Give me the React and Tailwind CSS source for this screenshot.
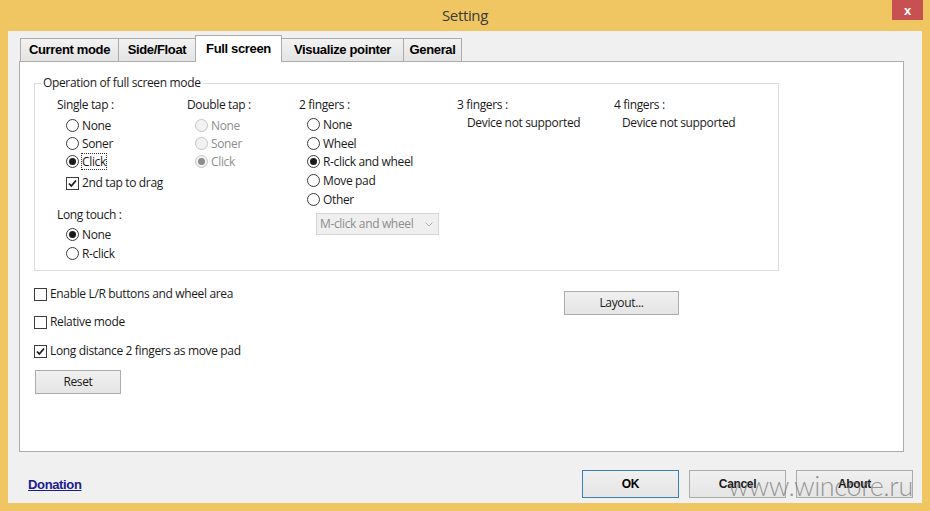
const ui = { fontFamily: '"Open Sans", "Noto Sans", sans-serif', letterSpacing: '-0.35px' }
const tab = { fontFamily: '"Liberation Sans", Arial, sans-serif' }

function Radio({ checked, disabled, label, focus, h = 'h-[18px]' }) {
  return (
    <div className={`flex ${h} items-center gap-[3px]`}>
      <span
        className={`flex h-[13px] w-[13px] shrink-0 items-center justify-center rounded-full border ${
          disabled ? 'border-[#c4c4c4] bg-[#f2f2f2]' : 'border-[#3c3c3c] bg-white'
        }`}
      >
        {checked && (
          <span className={`h-[7px] w-[7px] rounded-full ${disabled ? 'bg-[#8c8c8c]' : 'bg-[#1a1a1a]'}`} />
        )}
      </span>
      <span
        className={`leading-[15px] ${disabled ? 'text-[#8d8d8d]' : 'text-[#1a1a1a]'} ${
          focus ? 'outline outline-1 outline-dotted outline-[#333]' : ''
        }`}
      >
        {label}
      </span>
    </div>
  )
}

function Check({ checked, label, h = 'h-[18px]' }) {
  return (
    <div className={`flex ${h} items-center gap-[3px]`}>
      <span className="flex h-[13px] w-[13px] shrink-0 items-center justify-center border border-[#3c3c3c] bg-white">
        {checked && (
          <svg viewBox="0 0 11 11" className="h-[11px] w-[11px]">
            <path d="M2 5.5 L4.3 8 L9 2.5" fill="none" stroke="#1a1a1a" strokeWidth="1.8" />
          </svg>
        )}
      </span>
      <span className="text-[#1a1a1a]">{label}</span>
    </div>
  )
}

function Btn({ children, className = '', bold = false }) {
  return (
    <div
      className={`flex items-center justify-center border border-[#acacac] bg-gradient-to-b from-[#f0f0f0] to-[#e5e5e5] text-[#1a1a1a] ${className}`}
      style={bold ? tab : ui}
    >
      {children}
    </div>
  )
}

const tabs = [
  { label: 'Current mode', w: 'w-[99px]' },
  { label: 'Side/Float', w: 'w-[78px]' },
  { label: 'Full screen', w: 'w-[87px]', active: true },
  { label: 'Visualize pointer', w: 'w-[123px]' },
  { label: 'General', w: 'w-[59px]' },
]

export default function App() {
  return (
    <div className="flex h-[511px] w-[930px] flex-col bg-[#f0c663]">
      {/* Title bar */}
      <div className="relative flex h-[31px] shrink-0 items-center justify-center">
        <span className="text-[15px] text-[#3a3a3a]" style={ui}>Setting</span>
        <div className="absolute right-[7px] top-0 flex h-[20px] w-[31px] items-center justify-center bg-[#c75050]">
          <span className="text-[13px] font-bold leading-none text-white" style={tab}>x</span>
        </div>
      </div>

      {/* Client area */}
      <div className="relative mx-[8px] mb-[8px] flex flex-1 flex-col bg-[#f0f0f0] pl-[11px] pr-[18px] text-[12px]" style={ui}>
        {/* Tabs */}
        <div className="flex h-[30px] items-end pl-[1px]">
          {tabs.map(t =>
            t.active ? (
              <div
                key={t.label}
                className={`relative z-10 -mb-[1px] -ml-[1px] flex h-[27px] ${t.w} items-start justify-center border border-b-0 border-[#acacac] bg-white pt-[3px] text-[13px] font-bold text-black`}
                style={tab}
              >
                {t.label}
              </div>
            ) : (
              <div
                key={t.label}
                className={`-ml-[1px] flex h-[23px] ${t.w} items-center justify-center border border-b-0 border-[#acacac] bg-gradient-to-b from-[#f2f2f2] to-[#e4e4e4] text-[13px] font-bold text-black first:ml-0`}
                style={tab}
              >
                {t.label}
              </div>
            )
          )}
        </div>

        {/* Panel */}
        <div className="h-[391px] border border-[#acacac] bg-white pl-[14px]">
          <fieldset className="mr-[124px] mt-[13px] h-[196px] border border-[#dcdcdc] px-0 pb-0">
            <legend className="ml-[6px] px-[2px] leading-[16px] text-[#1a1a1a]">Operation of full screen mode</legend>
            <div className="mt-[6px] flex pl-[22px] text-[#1a1a1a]">
              {/* Single tap */}
              <div className="w-[130px]">
                <div className="leading-[16px]">Single tap :</div>
                <div className="mt-[3px] pl-[9px]">
                  <Radio label="None" />
                  <Radio label="Soner" />
                  <Radio label="Click" checked focus />
                  <div className="mt-[4px]">
                    <Check label="2nd tap to drag" checked />
                  </div>
                </div>
                <div className="mt-[15px] leading-[16px]">Long touch :</div>
                <div className="mt-[2px] pl-[9px]">
                  <Radio label="None" checked h="h-[19px]" />
                  <Radio label="R-click" h="h-[19px]" />
                </div>
              </div>

              {/* Double tap */}
              <div className="w-[112px]">
                <div className="leading-[16px]">Double tap :</div>
                <div className="mt-[3px] pl-[8px]">
                  <Radio label="None" disabled />
                  <Radio label="Soner" disabled />
                  <Radio label="Click" disabled checked />
                </div>
              </div>

              {/* 2 fingers */}
              <div className="w-[158px]">
                <div className="leading-[16px]">2 fingers :</div>
                <div className="mt-[2px] pl-[8px]">
                  <Radio label="None" h="h-[19px]" />
                  <Radio label="Wheel" h="h-[18px]" />
                  <Radio label="R-click and wheel" checked h="h-[19px]" />
                  <Radio label="Move pad" h="h-[19px]" />
                  <Radio label="Other" h="h-[19px]" />
                </div>
                <div className="ml-[17px] mt-[4px] flex h-[22px] w-[123px] items-center justify-between border border-[#d5d5d5] bg-[#efefef] pl-[3px] pr-[5px] text-[#8d8d8d]">
                  <span>M-click and wheel</span>
                  <svg viewBox="0 0 8 5" className="h-[5px] w-[8px]">
                    <path d="M0.5 0.5 L4 4 L7.5 0.5" fill="none" stroke="#b0b0b0" strokeWidth="1" />
                  </svg>
                </div>
              </div>

              {/* 3 fingers */}
              <div className="w-[157px]">
                <div className="leading-[16px]">3 fingers :</div>
                <div className="mt-[2px] pl-[10px] leading-[16px]">Device not supported</div>
              </div>

              {/* 4 fingers */}
              <div>
                <div className="leading-[16px]">4 fingers :</div>
                <div className="mt-[2px] pl-[8px] leading-[16px]">Device not supported</div>
              </div>
            </div>
          </fieldset>

          {/* Lower options */}
          <div className="mt-[14px] flex">
            <div className="w-[530px]">
              <Check label="Enable L/R buttons and wheel area" />
              <div className="mt-[10px]">
                <Check label="Relative mode" />
              </div>
              <div className="mt-[11px]">
                <Check label="Long distance 2 fingers as move pad" checked />
              </div>
              <Btn className="ml-[1px] mt-[10px] h-[24px] w-[86px]">Reset</Btn>
            </div>
            <Btn className="mt-[6px] h-[24px] w-[115px]">Layout...</Btn>
          </div>
        </div>

        {/* Bottom bar */}
        <div className="mt-[18px] flex items-start">
          <a className="mt-[7px] ml-[9px] text-[13px] font-bold leading-[16px] text-[#1b1b8f] underline" style={tab}>
            Donation
          </a>
          <div className="ml-auto mr-[-9px] flex gap-[10px]">
            <div
              className="flex h-[28px] w-[97px] items-center justify-center border border-[#3c7fb1] bg-gradient-to-b from-[#f0f0f0] to-[#e5e5e5] text-[12px] font-bold"
              style={tab}
            >
              OK
            </div>
            <Btn bold className="h-[28px] w-[97px] text-[12px] font-bold">Cancel</Btn>
            <Btn bold className="h-[28px] w-[117px] text-[12px] font-bold">About</Btn>
          </div>
        </div>

        {/* Watermark */}
        <span
          className="pointer-events-none absolute bottom-[-1px] right-[9px] text-[27px] font-light leading-[36px] text-[#6f6f6f]/70"
          style={{ fontFamily: 'Lato, "Open Sans", sans-serif' }}
        >
          www.wincore.ru
        </span>
      </div>
    </div>
  )
}
